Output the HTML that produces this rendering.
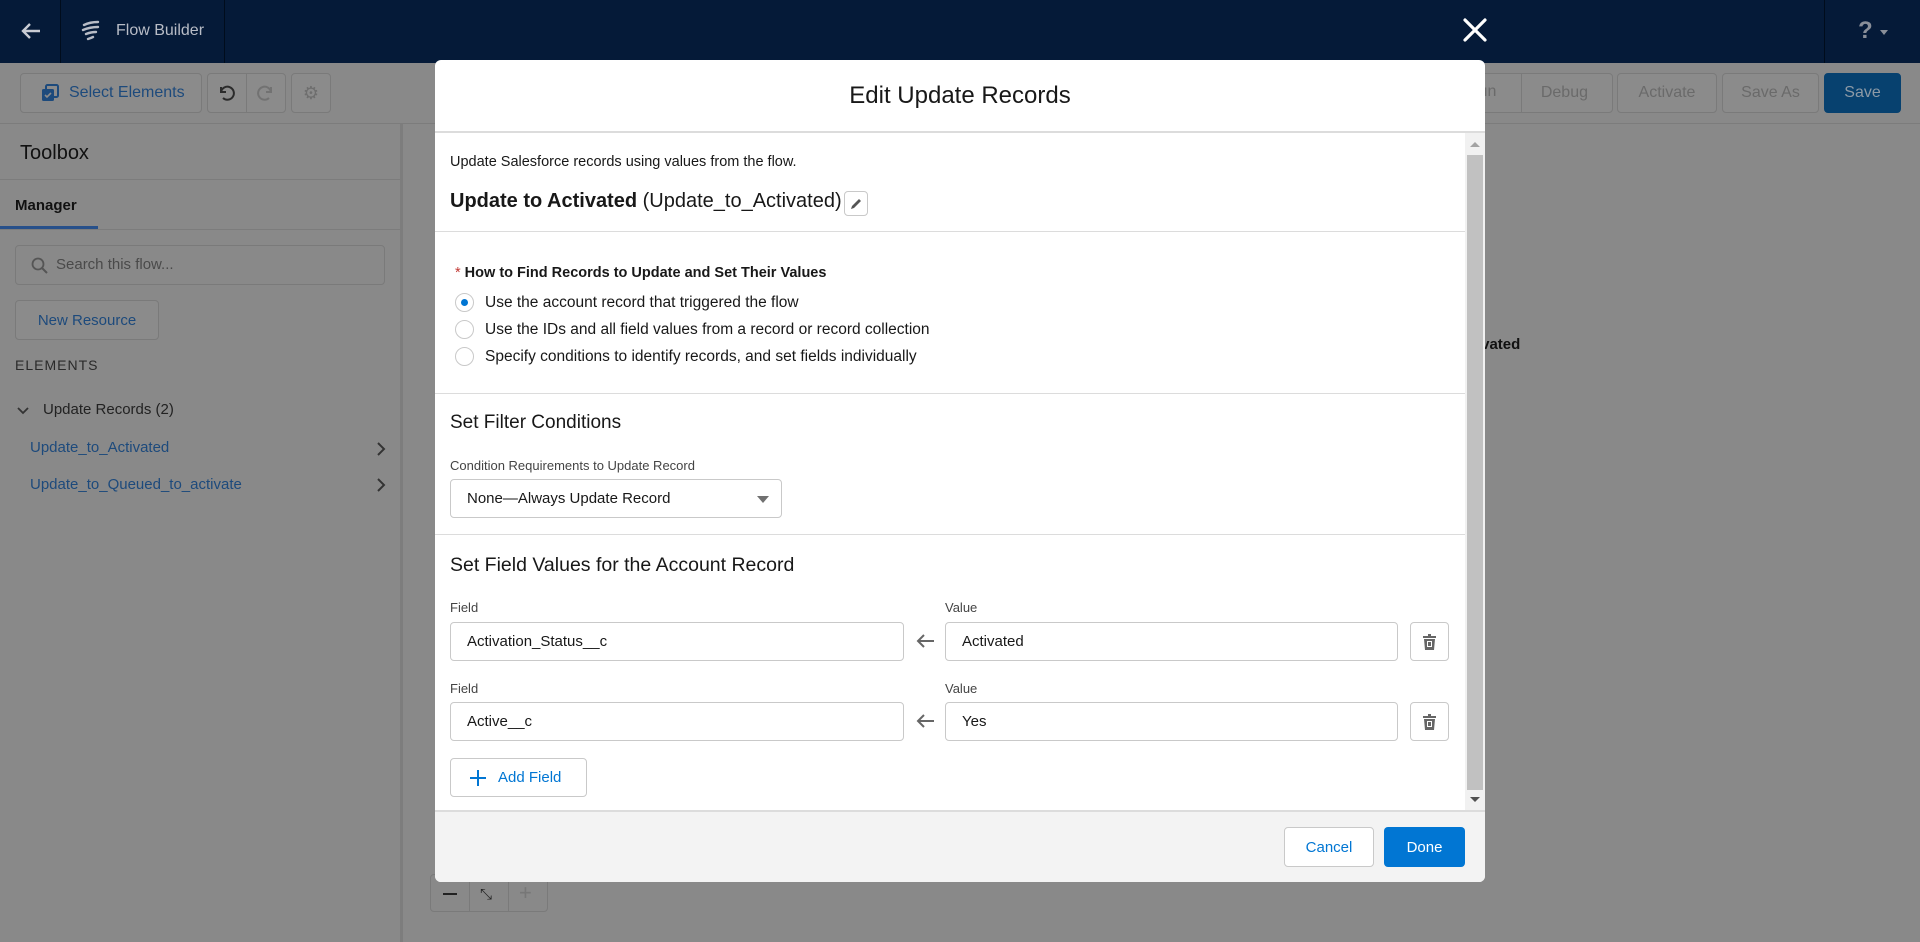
<!DOCTYPE html>
<html><head><meta charset="utf-8"><style>
*{box-sizing:border-box;margin:0;padding:0}
body{width:1920px;height:942px;position:relative;overflow:hidden;background:#898989;font-family:"Liberation Sans",sans-serif;color:#181818}
.a{position:absolute}
.hdr{left:0;top:0;width:1920px;height:63px;background:#051a38}
.btn{position:absolute;border:1px solid #7a7a7a;border-radius:4px;background:#8b8b8b;color:#6a6a6a;font-size:16px;display:flex;align-items:center;justify-content:center}
.t{position:absolute;white-space:nowrap}
.inp{position:absolute;border:1px solid #c9c9c9;border-radius:4px;background:#fff;font-size:15px;padding-left:16px;display:flex;align-items:center;color:#181818}
.lbl{position:absolute;font-size:13px;color:#444}
.hr{position:absolute;left:0;width:1030px;height:1px;background:#dcdcdc}
.radio{position:absolute;width:19px;height:19px;border:1px solid #c9c9c9;border-radius:50%;background:#fff}
</style></head><body>
<div class="a hdr"></div>
<svg class="a" style="left:20px;top:20px" width="22" height="22" viewBox="0 0 22 22"><path d="M20 11H3M10 4L3 11l7 7" stroke="#c9ccd4" stroke-width="2.4" fill="none"/></svg>
<div class="a" style="left:60px;top:0;width:1px;height:63px;background:#000c1c"></div>
<svg class="a" style="left:80px;top:20px" width="22" height="24" viewBox="0 0 22 24"><path d="M4 5q6-3 14-3M3 10q7-3 15-3M6 14q5-2 10-2M8 19q3-1 5-2" stroke="#b8bcc6" stroke-width="2.4" fill="none" stroke-linecap="round"/></svg>
<div class="t" style="left:116px;top:22px;font-size:16px;color:#b8bcc6">Flow Builder</div>
<div class="a" style="left:224px;top:0;width:1px;height:63px;background:#000c1c"></div>
<div class="a" style="left:1824px;top:0;width:1px;height:63px;background:#000c1c"></div>
<div class="t" style="left:1858px;top:17px;font-size:24px;color:#8a8f99;font-weight:bold">?</div>
<div class="a" style="left:1880px;top:30px;border-left:4px solid transparent;border-right:4px solid transparent;border-top:5px solid #8a8f99"></div>
<svg class="a" style="left:1463px;top:18px" width="24" height="24" viewBox="0 0 24 24"><path d="M2 2L22 22M22 2L2 22" stroke="#fff" stroke-width="3.2" stroke-linecap="round"/></svg>

<!-- toolbar -->
<div class="a" style="left:0;top:123px;width:1920px;height:1px;background:#7c7c7c"></div>
<div class="btn" style="left:20px;top:73px;width:182px;height:40px;color:#1d4a7c;justify-content:flex-start;padding-left:48px">Select Elements</div>
<svg class="a" style="left:41px;top:84px" width="18" height="18" viewBox="0 0 18 18"><rect x="5" y="1" width="12" height="12" rx="1.5" fill="none" stroke="#1d4a7c" stroke-width="2"/><rect x="1" y="5" width="12" height="12" rx="1.5" fill="#1d4a7c"/><path d="M4 11l2 2 4-4" stroke="#8b8b8b" stroke-width="1.6" fill="none"/></svg>
<div class="btn" style="left:207px;top:73px;width:79px;height:40px"></div>
<div class="a" style="left:246px;top:74px;width:1px;height:38px;background:#7a7a7a"></div>
<svg class="a" style="left:218px;top:84px" width="18" height="18" viewBox="0 0 18 18"><path d="M3 3v5h5M3 8a6.5 6.5 0 1 1 2 6" stroke="#2b2b2b" stroke-width="2" fill="none"/></svg>
<svg class="a" style="left:256px;top:84px" width="18" height="18" viewBox="0 0 18 18"><path d="M15 3v5h-5M15 8a6.5 6.5 0 1 0-2 6" stroke="#727272" stroke-width="2" fill="none"/></svg>
<div class="btn" style="left:291px;top:73px;width:40px;height:40px"><span style="font-size:18px;color:#6e6e6e">⚙</span></div>
<div class="btn" style="left:1440px;top:73px;width:173px;height:40px;justify-content:flex-end;padding-right:24px">Debug</div>
<div class="t" style="left:1467px;top:83px;font-size:16px;color:#6a6a6a">Run</div>
<div class="a" style="left:1521px;top:74px;width:1px;height:38px;background:#7a7a7a"></div>
<div class="btn" style="left:1617px;top:73px;width:100px;height:40px">Activate</div>
<div class="btn" style="left:1722px;top:73px;width:97px;height:40px">Save As</div>
<div class="btn" style="left:1824px;top:73px;width:77px;height:40px;background:#07416f;border-color:#07416f;color:#8d9aa6">Save</div>
<div class="t" style="left:1380px;top:336px;font-size:15px;font-weight:bold;color:#111">Update to Activated</div>

<!-- left panel -->
<div class="a" style="left:400px;top:124px;width:3px;height:818px;background:#7d7d7d"></div>
<div class="t" style="left:20px;top:142px;font-size:20px;color:#111">Toolbox</div>
<div class="a" style="left:0;top:179px;width:400px;height:1px;background:#7c7c7c"></div>
<div class="t" style="left:15px;top:197px;font-size:15px;font-weight:bold;color:#111">Manager</div>
<div class="a" style="left:0;top:226px;width:98px;height:3px;background:#27508a"></div>
<div class="a" style="left:0;top:229px;width:400px;height:1px;background:#7c7c7c"></div>
<div class="a" style="left:15px;top:245px;width:370px;height:40px;border:1px solid #7a7a7a;border-radius:4px"></div>
<svg class="a" style="left:31px;top:257px" width="17" height="17" viewBox="0 0 17 17"><circle cx="7" cy="7" r="5.5" stroke="#555" stroke-width="1.8" fill="none"/><path d="M11 11l5 5" stroke="#555" stroke-width="2"/></svg>
<div class="t" style="left:56px;top:256px;font-size:15px;color:#4a4a4a">Search this flow...</div>
<div class="btn" style="left:15px;top:300px;width:144px;height:40px;color:#1d4a7c;font-size:15px">New Resource</div>
<div class="t" style="left:15px;top:357px;font-size:14px;letter-spacing:1px;color:#2a2a2a">ELEMENTS</div>
<svg class="a" style="left:16px;top:405px" width="14" height="12" viewBox="0 0 14 12"><path d="M2 3l5 5 5-5" stroke="#333" stroke-width="1.8" fill="none"/></svg>
<div class="t" style="left:43px;top:401px;font-size:15px;color:#222">Update Records (2)</div>
<div class="t" style="left:30px;top:439px;font-size:15px;color:#1d4a7c">Update_to_Activated</div>
<div class="t" style="left:30px;top:476px;font-size:15px;color:#1d4a7c">Update_to_Queued_to_activate</div>
<svg class="a" style="left:376px;top:441px" width="10" height="16" viewBox="0 0 10 16"><path d="M2 2l6 6-6 6" stroke="#333" stroke-width="2" fill="none"/></svg>
<svg class="a" style="left:376px;top:477px" width="10" height="16" viewBox="0 0 10 16"><path d="M2 2l6 6-6 6" stroke="#333" stroke-width="2" fill="none"/></svg>

<!-- zoom controls -->
<div class="a" style="left:430px;top:874px;width:118px;height:38px;border:1px solid #7a7a7a;border-radius:4px"></div>
<div class="a" style="left:469px;top:876px;width:1px;height:36px;background:#7a7a7a"></div>
<div class="a" style="left:508px;top:876px;width:1px;height:36px;background:#7a7a7a"></div>
<div class="a" style="left:443px;top:893px;width:14px;height:2px;background:#222"></div>
<div class="t" style="left:519px;top:880px;font-size:22px;color:#777">+</div>
<div class="t" style="left:480px;top:886px;font-size:15px;color:#222">⤡</div>

<!-- modal -->
<div class="a" style="left:435px;top:60px;width:1050px;height:822px;background:#fff;border-radius:6px;overflow:hidden">
 <div class="t" style="left:0;width:1050px;text-align:center;top:22px;font-size:24px;color:#181818">Edit Update Records</div>
 <div class="a" style="left:0;top:71px;width:1050px;height:2px;background:#dcdcdc"></div>
 <div class="a" style="left:1030px;top:73px;width:20px;height:677px;background:#f1f1f1"></div>
 <div class="a" style="left:1032px;top:95px;width:16px;height:635px;background:#c1c1c1"></div>
 <div class="a" style="left:1035px;top:82px;border-left:5px solid transparent;border-right:5px solid transparent;border-bottom:5px solid #a3a3a3"></div>
 <div class="a" style="left:1035px;top:737px;border-left:5px solid transparent;border-right:5px solid transparent;border-top:5px solid #505050"></div>
 <div class="t" style="left:15px;top:94px;font-size:14.5px">Update Salesforce records using values from the flow.</div>
 <div class="t" style="left:15px;top:130px;font-size:20px"><b>Update to Activated</b> (Update_to_Activated)</div>
 <div class="a" style="left:409px;top:131px;width:24px;height:25px;border:1px solid #c9c9c9;border-radius:4px"></div>
 <svg class="a" style="left:414px;top:137px" width="14" height="14" viewBox="0 0 14 14"><path d="M2 12l1-3 7-7 2 2-7 7z" fill="#555"/></svg>
 <div class="hr" style="top:171px"></div>
 <div class="t" style="left:20px;top:205px;font-size:14.5px;font-weight:bold"><span style="color:#c23934;font-weight:normal">*</span> How to Find Records to Update and Set Their Values</div>
 <div class="radio" style="left:20px;top:233px"></div><div class="a" style="left:26px;top:239px;width:7px;height:7px;border-radius:50%;background:#0176d3"></div>
 <div class="radio" style="left:20px;top:260px"></div>
 <div class="radio" style="left:20px;top:287px"></div>
 <div class="t" style="left:50px;top:234px;font-size:15.5px">Use the account record that triggered the flow</div>
 <div class="t" style="left:50px;top:261px;font-size:15.5px">Use the IDs and all field values from a record or record collection</div>
 <div class="t" style="left:50px;top:288px;font-size:15.5px">Specify conditions to identify records, and set fields individually</div>
 <div class="hr" style="top:333px"></div>
 <div class="t" style="left:15px;top:352px;font-size:19px">Set Filter Conditions</div>
 <div class="lbl" style="left:15px;top:398px">Condition Requirements to Update Record</div>
 <div class="inp" style="left:15px;top:419px;width:332px;height:39px">None—Always Update Record</div>
 <div class="a" style="left:322px;top:436px;border-left:6px solid transparent;border-right:6px solid transparent;border-top:7px solid #707070"></div>
 <div class="hr" style="top:474px"></div>
 <div class="t" style="left:15px;top:494px;font-size:19.5px">Set Field Values for the Account Record</div>
 <div class="lbl" style="left:15px;top:540px">Field</div>
 <div class="lbl" style="left:510px;top:540px">Value</div>
 <div class="inp" style="left:15px;top:562px;width:454px;height:39px">Activation_Status__c</div>
 <div class="inp" style="left:510px;top:562px;width:453px;height:39px">Activated</div>
 <div class="lbl" style="left:15px;top:621px">Field</div>
 <div class="lbl" style="left:510px;top:621px">Value</div>
 <div class="inp" style="left:15px;top:642px;width:454px;height:39px">Active__c</div>
 <div class="inp" style="left:510px;top:642px;width:453px;height:39px">Yes</div>
 <svg class="a" style="left:480px;top:573px" width="20" height="16" viewBox="0 0 20 16"><path d="M19 8H3M9 2L3 8l6 6" stroke="#666" stroke-width="2" fill="none"/></svg>
 <svg class="a" style="left:480px;top:653px" width="20" height="16" viewBox="0 0 20 16"><path d="M19 8H3M9 2L3 8l6 6" stroke="#666" stroke-width="2" fill="none"/></svg>
 <div class="a" style="left:975px;top:562px;width:39px;height:39px;border:1px solid #c9c9c9;border-radius:4px"></div>
 <div class="a" style="left:975px;top:642px;width:39px;height:39px;border:1px solid #c9c9c9;border-radius:4px"></div>
 <svg class="a" style="left:988px;top:574px" width="13" height="16" viewBox="0 0 13 16"><path d="M5 0h3v2h5v2H0V2h5z M1 5h11l-1 11H2z" fill="#666"/><rect x="4" y="7" width="5" height="6" fill="#fff"/><rect x="5" y="8" width="3" height="4" fill="#666"/></svg>
 <svg class="a" style="left:988px;top:654px" width="13" height="16" viewBox="0 0 13 16"><path d="M5 0h3v2h5v2H0V2h5z M1 5h11l-1 11H2z" fill="#666"/><rect x="4" y="7" width="5" height="6" fill="#fff"/><rect x="5" y="8" width="3" height="4" fill="#666"/></svg>
 <div class="a" style="left:15px;top:698px;width:137px;height:39px;border:1px solid #c9c9c9;border-radius:4px"></div>
 <svg class="a" style="left:35px;top:710px" width="16" height="16" viewBox="0 0 16 16"><path d="M8 0v16M0 8h16" stroke="#0176d3" stroke-width="2"/></svg>
 <div class="t" style="left:63px;top:709px;font-size:15px;color:#0176d3">Add Field</div>
 <div class="a" style="left:0;top:750px;width:1050px;height:72px;background:#f3f3f3;border-top:2px solid #dcdcdc"></div>
 <div class="a" style="left:849px;top:767px;width:90px;height:40px;background:#fff;border:1px solid #c9c9c9;border-radius:4px;color:#0176d3;font-size:15px;display:flex;align-items:center;justify-content:center">Cancel</div>
 <div class="a" style="left:949px;top:767px;width:81px;height:40px;background:#0176d3;border-radius:4px;color:#fff;font-size:15px;display:flex;align-items:center;justify-content:center">Done</div>
</div>
</body></html>
